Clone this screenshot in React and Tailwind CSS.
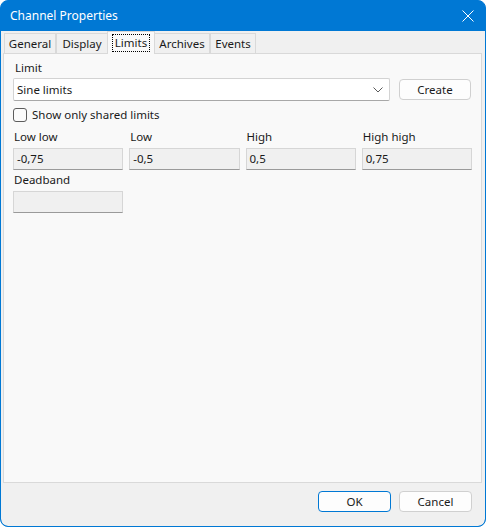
import React from "react"

const font = { fontFamily: '"Segoe UI", "Noto Sans", sans-serif' }

function Tab({ label, active, w }) {
  if (active) {
    return (
      <div className={`relative z-10 -mx-px -mb-px flex h-[23px] items-center justify-center border border-b-0 border-[#d9d9d9] bg-[#f9f9f9] ${w}`}>
        <span className="border border-dotted border-black px-[2px] leading-[16px]">{label}</span>
      </div>
    )
  }
  return (
    <div className={`mt-[2px] flex h-[20px] items-center justify-center border border-b-0 border-[#d9d9d9] bg-[#f0f0f0] leading-[16px] ${w}`}>
      {label}
    </div>
  )
}

function Field({ label, value }) {
  return (
    <div className="flex flex-col">
      <p className="h-[16px] leading-[16px] pl-px">{label}</p>
      <div className="mt-[3px] flex h-[22px] items-center border border-[#d6d6d6] border-b-[#9a9a9a] bg-[#f0f0f0] px-[3px] leading-[16px]">
        {value}
      </div>
    </div>
  )
}

export default function App() {
  return (
    <div
      style={font}
      className="flex h-[527px] w-[486px] flex-col overflow-hidden rounded-lg border border-[#0078d4] bg-[#0078d4] text-[11.5px] text-[#1a1a1a]"
    >
      {/* title bar */}
      <div className="flex h-[30px] shrink-0 items-center justify-between pl-[9px] pr-[10px] text-white">
        <p className="text-[12px] leading-[16px]">Channel Properties</p>
        <svg width="12" height="12" viewBox="0 0 12 12" className="mr-px">
          <path d="M0.5 0.5 L11.5 11.5 M11.5 0.5 L0.5 11.5" stroke="white" strokeWidth="1" />
        </svg>
      </div>

      <div className="flex flex-1 flex-col rounded-b-[7px] bg-[#f0f0f0]">
        {/* tabs */}
        <div className="flex px-[2px] pr-[3px] pt-0">
          <div className="flex w-full flex-col">
            <div className="flex h-[22px] items-end pl-[1px]">
              <Tab label="General" w="w-[52px]" />
              <Tab label="Display" w="w-[52px]" />
              <Tab label="Limits" w="w-[48px]" active />
              <Tab label="Archives" w="w-[56px]" />
              <Tab label="Events" w="w-[46px]" />
            </div>

            {/* panel */}
            <div className="h-[430px] border border-[#d9d9d9] bg-[#f9f9f9] pl-[9px] pr-[9px] pt-[6px]">
              <p className="h-[16px] leading-[16px] pl-[2px]">Limit</p>
              <div className="mt-[2px] flex items-center gap-[9px]">
                <div className="flex h-[23px] flex-1 items-center justify-between rounded-[2px] border border-[#d3d3d3] border-b-[#a8a8a8] bg-white pl-[3px] pr-[6px] leading-[16px]">
                  <span>Sine limits</span>
                  <svg width="10" height="6" viewBox="0 0 10 6">
                    <path d="M0.5 0.5 L5 5 L9.5 0.5" fill="none" stroke="#5a5a5a" strokeWidth="1" />
                  </svg>
                </div>
                <button className="mr-px flex h-[21px] w-[72px] items-center justify-center rounded-[4px] border border-[#d0d0d0] bg-[#fdfdfd] leading-[16px]">
                  Create
                </button>
              </div>

              <div className="mt-[6px] flex h-[16px] items-center">
                <div className="h-[14px] w-[14px] rounded-[3px] border border-[#5c5c5c] bg-[#fbfbfb]" />
                <span className="ml-[5px] leading-[16px]">Show only shared limits</span>
              </div>

              <div className="mt-[6px] grid grid-cols-4 gap-x-[6px]">
                <Field label="Low low" value="-0,75" />
                <Field label="Low" value="-0,5" />
                <Field label="High" value="0,5" />
                <Field label="High high" value="0,75" />
              </div>

              <div className="mt-[2px] w-[110px]">
                <Field label="Deadband" value="" />
              </div>
            </div>
          </div>
        </div>

        {/* footer */}
        <div className="flex flex-1 items-start justify-end gap-[8px] pr-[13px] pt-[8px]">
          <button className="flex h-[21px] w-[73px] items-center justify-center rounded-[4px] border border-[#0078d4] bg-[#fdfdfd] leading-[16px]">
            OK
          </button>
          <button className="flex h-[21px] w-[73px] items-center justify-center rounded-[4px] border border-[#d0d0d0] bg-[#fdfdfd] leading-[16px]">
            Cancel
          </button>
        </div>
      </div>
    </div>
  )
}
